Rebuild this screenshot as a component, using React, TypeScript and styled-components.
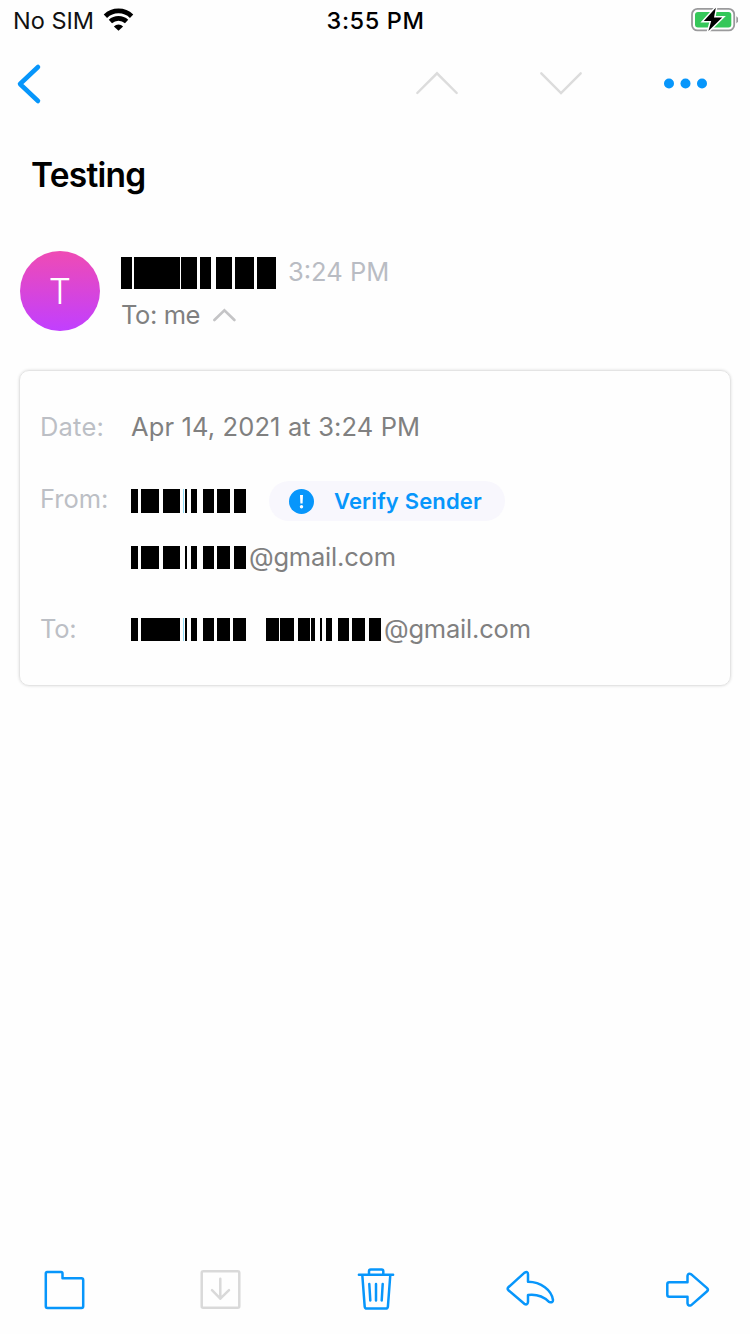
import React from 'react';
import styled, { createGlobalStyle } from 'styled-components';

const BLUE = '#0796fb';

const GlobalStyle = createGlobalStyle`
  body {
    margin: 0;
    background: #fefefe;
    font-family: Inter, "Liberation Sans", sans-serif;
  }
`;

const Screen = styled.div`
  display: flex;
  flex-direction: column;
  width: 750px;
  height: 1334px;
  background: #fefefe;
  overflow: hidden;
`;

const Text = styled.span<{ $size?: number; $weight?: number; $color?: string; $track?: number }>`
  font-size: ${(p) => p.$size ?? 25.5}px;
  font-weight: ${(p) => p.$weight ?? 400};
  color: ${(p) => p.$color ?? '#808080'};
  letter-spacing: ${(p) => p.$track ?? 0}px;
  line-height: 32px;
  white-space: pre;
`;

const StatusBar = styled.div`
  box-sizing: border-box;
  display: grid;
  grid-template-columns: 1fr auto 1fr;
  align-items: center;
  height: 40px;
  padding: 1px 12px 0 13px;
`;

const Carrier = styled.div`
  display: flex;
  align-items: center;
  gap: 9px;
`;

const WifiIcon = styled.svg`
  margin-bottom: 2px;
`;

const BatteryIcon = styled.svg`
  justify-self: end;
  margin-bottom: 2px;
`;

const NavBar = styled.nav`
  display: flex;
  align-items: center;
  height: 88px;
  padding: 0 41px 0 16px;
`;

const NavSpacer = styled.div`
  flex: 1;
`;

const NavActions = styled.div`
  display: flex;
  align-items: center;
  gap: 80px;
`;

const Subject = styled.h1`
  margin: 0;
  padding: 27px 31px 0;
  height: 96px;
  font-size: 33.5px;
  font-weight: 600;
  line-height: 40px;
  letter-spacing: -0.75px;
  color: #000;
`;

const Sender = styled.section`
  display: flex;
  align-items: center;
  gap: 21px;
  height: 80px;
  padding: 0 20px;
`;

const Avatar = styled.div`
  display: flex;
  align-items: center;
  justify-content: center;
  width: 80px;
  height: 80px;
  border-radius: 50%;
  background: linear-gradient(#ef4bb4, #c13fff);
  color: #fff;
  font-size: 35px;
  font-weight: 300;
  line-height: 80px;
`;

const SenderLines = styled.div`
  display: flex;
  flex-direction: column;
  gap: 10px;
  padding-top: 5px;
`;

const Line = styled.div<{ $gap: number; $align?: string }>`
  display: flex;
  align-items: ${(p) => p.$align ?? 'center'};
  gap: ${(p) => p.$gap}px;
`;

const Card = styled.section`
  box-sizing: border-box;
  display: flex;
  flex-direction: column;
  width: 712px;
  height: 316px;
  margin: 39px 0 0 19px;
  padding: 40px 20px 0;
  border: 1px solid #e4e4e4;
  border-radius: 10px;
  box-shadow: 0 0 3px rgba(0, 0, 0, 0.14);
`;

const Field = styled.div<{ $height: number }>`
  display: grid;
  grid-template-columns: 91px 1fr;
  align-items: start;
  height: ${(p) => p.$height}px;
`;

const FieldValue = styled.div`
  display: flex;
  flex-direction: column;
`;

const FromName = styled.div`
  display: flex;
  align-items: center;
  gap: 23px;
  height: 40px;
  margin: -2px 0 20px;
`;

const VerifyButton = styled.button`
  display: flex;
  align-items: center;
  gap: 20px;
  box-sizing: border-box;
  width: 236px;
  height: 40px;
  padding: 0 0 0 20px;
  border: 0;
  border-radius: 20px;
  background: #f8f7fd;
  font-family: inherit;
`;

const Toolbar = styled.footer`
  display: flex;
  gap: 104px;
  margin-top: auto;
  padding: 0 0 19px 38px;
`;

const ToolIcon = styled.svg<{ $muted?: boolean }>`
  width: 52px;
  height: 50px;
  flex: none;
  fill: none;
  stroke: ${(p) => (p.$muted ? '#d9d9d9' : BLUE)};
  stroke-width: 2.5;
  stroke-linecap: round;
  stroke-linejoin: round;
`;

const BarStrip = styled.div<{ $height: number; $drop?: number }>`
  display: flex;
  height: ${(p) => p.$height}px;
  margin-top: ${(p) => p.$drop ?? 0}px;
`;

const Bar = styled.i<{ $before: number; $width: number; $tint?: string }>`
  width: ${(p) => p.$width}px;
  margin-left: ${(p) => p.$before}px;
  background: ${(p) => p.$tint ?? '#000'};
`;

type Segment = [before: number, width: number, tint?: string];

const NAME: Segment[] = [[0, 11], [2, 46], [1, 16], [3, 11], [5, 16], [3, 19], [3, 19]];
const FROM: Segment[] = [[0, 7], [3, 18], [4, 17], [3, 1, '#8edcf8'], [1, 2], [4, 6], [6, 11], [3, 13], [4, 12]];
const EMAIL: Segment[] = [[0, 7], [3, 18], [4, 17], [5, 2], [4, 6], [6, 11], [3, 13], [4, 12]];
const TO: Segment[] = [[0, 7], [3, 39], [3, 1, '#8edcf8'], [1, 2], [4, 6], [6, 11], [3, 13], [3, 13]];
const TO_EMAIL: Segment[] = [[0, 13], [1, 14], [4, 12], [1, 4], [5, 2], [4, 6], [6, 11], [3, 13], [4, 12]];

function Redacted({ segments, height, drop }: { segments: Segment[]; height: number; drop?: number }) {
  return (
    <BarStrip $height={height} $drop={drop}>
      {segments.map(([before, width, tint], i) => (
        <Bar key={i} $before={before} $width={width} $tint={tint} />
      ))}
    </BarStrip>
  );
}

export default function App() {
  return (
    <Screen>
      <GlobalStyle />
      <StatusBar>
        <Carrier>
          <Text $size={23.5} $color="#111">No SIM</Text>
          <WifiIcon width="31" height="24" viewBox="0 0 31 24">
            <g fill="none" stroke="#000" strokeWidth="4.8">
              <path d="M2.4 8.2a19 19 0 0 1 26.2 0" />
              <path d="M7.4 13.6a12 12 0 0 1 16.2 0" />
            </g>
            <path d="M15.5 22.8l-4.6-4.4a6.6 6.6 0 0 1 9.2 0z" />
          </WifiIcon>
        </Carrier>
        <Text $size={23.5} $weight={500} $color="#000" $track={0.6}>3:55 PM</Text>
        <BatteryIcon width="48" height="26" viewBox="0 0 48 26">
          <rect x="2" y="1.9" width="42.2" height="21.5" rx="5.5" fill="none" stroke="#9a9a9c" strokeWidth="1.8" />
          <path d="M46.3 9.2q2 1 2 3.6t-2 3.6z" fill="#9a9a9c" />
          <rect x="5" y="4.9" width="36.3" height="15.5" rx="3" fill="#35c759" />
          <path
            d="M25.8 .8L13.8 14h7.4l-2.8 10L32.2 10.4h-8.2z"
            fill="#000"
            stroke="#fefefe"
            strokeWidth="3"
            paintOrder="stroke"
          />
        </BatteryIcon>
      </StatusBar>

      <NavBar>
        <svg width="28" height="44" viewBox="0 0 28 44" fill="none" stroke={BLUE} strokeWidth="4.5" strokeLinecap="round" strokeLinejoin="round">
          <path d="M22 5L4 22l18 17" />
        </svg>
        <NavSpacer />
        <NavActions>
          <svg width="44" height="26" viewBox="0 0 44 26" fill="none" stroke="#dcdcdc" strokeWidth="2.4" strokeLinecap="round">
            <path d="M2.3 22L22 2.3 41.7 22" />
          </svg>
          <svg width="44" height="26" viewBox="0 0 44 26" fill="none" stroke="#dcdcdc" strokeWidth="2.4" strokeLinecap="round">
            <path d="M2.3 2.3L22 22 41.7 2.3" />
          </svg>
          <svg width="46" height="12" viewBox="0 0 46 12" fill={BLUE}>
            <circle cx="6" cy="5.5" r="5" />
            <circle cx="22.5" cy="5.5" r="5" />
            <circle cx="39" cy="5.5" r="5" />
          </svg>
        </NavActions>
      </NavBar>

      <Subject>Testing</Subject>

      <Sender>
        <Avatar>T</Avatar>
        <SenderLines>
          <Line $gap={12} $align="flex-start">
            <Redacted segments={NAME} height={32} drop={1} />
            <Text $color="#b9bcc3">3:24 PM</Text>
          </Line>
          <Line $gap={12}>
            <Text $track={-0.4}>To: me</Text>
            <svg width="24" height="14" viewBox="0 0 24 14" fill="none" stroke="#c4c4c6" strokeWidth="2.6" strokeLinecap="round">
              <path d="M2.4 12L12.4 2.2 22.4 12" />
            </svg>
          </Line>
        </SenderLines>
      </Sender>

      <Card>
        <Field $height={72}>
          <Text $color="#bcbfc5" $track={0.2}>Date:</Text>
          <Text $track={0.13}>Apr 14, 2021 at 3:24 PM</Text>
        </Field>
        <Field $height={130}>
          <Text $color="#bcbfc5">From:</Text>
          <FieldValue>
            <FromName>
              <Redacted segments={FROM} height={24} />
              <VerifyButton>
                <svg width="25" height="25" viewBox="0 0 25 25">
                  <circle cx="12.5" cy="12.5" r="12.5" fill={BLUE} />
                  <path d="M11 6h3l-.4 8.5h-2.2z" fill="#fff" />
                  <circle cx="12.5" cy="17.8" r="1.7" fill="#fff" />
                </svg>
                <Text $size={22} $weight={600} $color={BLUE} $track={0.17}>Verify Sender</Text>
              </VerifyButton>
            </FromName>
            <Line $gap={3}>
              <Redacted segments={EMAIL} height={23} drop={1} />
              <Text $track={-0.2}>@gmail.com</Text>
            </Line>
          </FieldValue>
        </Field>
        <Field $height={40}>
          <Text $color="#bcbfc5" $track={-0.3}>To:</Text>
          <Line $gap={20}>
            <Redacted segments={TO} height={23} drop={1} />
            <Line $gap={3}>
              <Redacted segments={TO_EMAIL} height={23} drop={1} />
              <Text $track={-0.2}>@gmail.com</Text>
            </Line>
          </Line>
        </Field>
      </Card>

      <Toolbar>
        <ToolIcon viewBox="0 0 52 50">
          <path d="M9.3 7H23q1.5 0 1.5 1.5v4.8h19q1.7 0 1.7 1.7v26.3q0 1.7-1.7 1.7H9.5q-1.7 0-1.7-1.7V8.5Q7.8 7 9.3 7z" />
        </ToolIcon>
        <ToolIcon viewBox="0 0 52 50" $muted>
          <rect x="7.7" y="6.2" width="37.6" height="36.5" rx="1.5" />
          <path d="M26.3 13.7v20M18 25.2l8.3 8.5 8.7-8.5" />
        </ToolIcon>
        <ToolIcon viewBox="0 0 52 50">
          <path d="M8.9 9.8h34.2M19 9.5V6.3q0-1.7 1.7-1.7h10.9q1.7 0 1.7 1.7v3.2M12.3 10l2.4 31.6q.2 2 2.2 2h18.8q2 0 2.2-2L40.3 10M19.3 19l1 16.5M26 19v16.5M32.7 19l-1 16.5" />
        </ToolIcon>
        <ToolIcon viewBox="0 0 52 50">
          <path d="M2.4 22.2L18.3 7.9q3.7-2.2 3.7 1.4v7.5c13 .2 23.6 8 25 18.2q0 3.4-4 1.8C37 31 30 29 22 30v6.8q-.4 3.8-3.7 2L2.4 25.2q-1.4-1.5 0-3z" />
        </ToolIcon>
        <ToolIcon viewBox="0 0 52 50">
          <path d="M7.3 17.3h18.2V11q.5-3.4 3.8-1.6l15.8 13.7q1.6 1.6 0 3.2L29.3 40.1q-3.3 1.5-3.8-1.8v-6.6H7.3q-2 0-2-2V19.3q0-2 2-2z" />
        </ToolIcon>
      </Toolbar>
    </Screen>
  );
}
